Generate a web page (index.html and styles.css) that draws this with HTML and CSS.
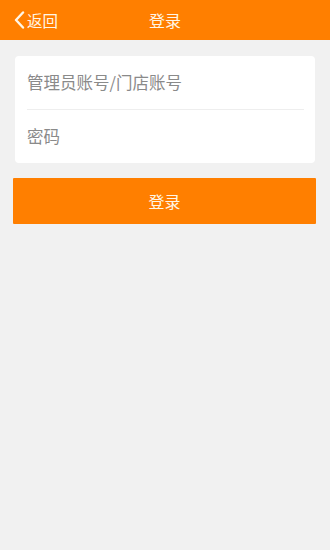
FILE: index.html
```html
<!DOCTYPE html>
<html lang="zh-CN">
<head>
    <meta charset="UTF-8">
    <meta name="viewport" content="width=device-width, initial-scale=1.0">
    <title>登录</title>
    <link rel="stylesheet" href="styles.css">
</head>
<body>
    <div class="topo">
        <a class="voltar" href="#">
            <svg class="seta" width="12" height="18" viewBox="0 0 12 18">
                <path d="M10 1.5 L3 9 L10 16.5" fill="none" stroke="#fff6e6" stroke-width="2.4" stroke-linecap="round" stroke-linejoin="round"/>
            </svg>
            <span>返回</span>
        </a>
        <div class="titulo">登录</div>
    </div>
    <div class="cartao">
        <div class="campo">管理员账号/门店账号</div>
        <div class="linha"></div>
        <div class="campo">密码</div>
    </div>
    <div class="botao">登录</div>
</body>
</html>
```

FILE: styles.css
```css
body {
    margin: 0;
    font-family: "Noto Sans CJK SC", "Noto Sans", sans-serif;
    background-color: #f1f1f1;
    width: 330px;
    height: 550px;
}
.topo {
    position: relative;
    height: 40px;
    background-color: #ff7f00;
    display: flex;
    align-items: center;
    justify-content: center;
}
.voltar {
    position: absolute;
    left: 13px;
    top: 0;
    height: 40px;
    display: flex;
    align-items: center;
    color: #fff6e6;
    text-decoration: none;
    font-size: 15.5px;
}
.seta {
    margin-right: 2px;
}
.titulo {
    color: #fff6e6;
    font-size: 16px;
}
.cartao {
    margin: 16px 15px 0 15px;
    background-color: #ffffff;
    border-radius: 4px;
    padding: 0 11px 0 12px;
}
.campo {
    height: 53px;
    line-height: 53px;
    font-size: 16.5px;
    color: #8a8a8a;
}
.linha {
    height: 1px;
    background-color: #eeeeee;
}
.botao {
    margin: 15px 14px 0 13px;
    height: 46px;
    line-height: 46px;
    background-color: #ff7f00;
    color: #fff6e6;
    text-align: center;
    font-size: 16px;
    border-radius: 1px;
}
```
